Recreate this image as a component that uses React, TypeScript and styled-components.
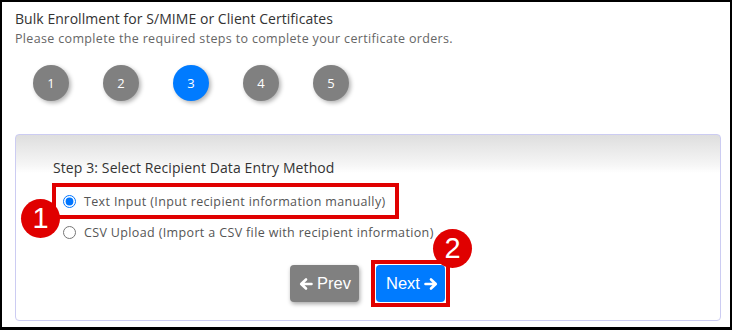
import React from "react";
import styled, { createGlobalStyle } from "styled-components";

const Global = createGlobalStyle`
  html, body { margin: 0; padding: 0; background: #000; }
  body { font-family: "Open Sans", "Noto Sans", sans-serif; }
  #root { padding: 2px 2px 3px 2px; }
`;

const Frame = styled.div`
  position: relative;
  box-sizing: border-box;
  width: 728px;
  height: 325px;
  background: #fff;
  padding: 7px 9px 0 13px;
  display: flex;
  flex-direction: column;
`;

const Title = styled.div`
  font-size: 14px;
  line-height: 20px;
  color: #333;
  font-weight: 500;
  letter-spacing: 0.05px;
`;

const Subtitle = styled.div`
  font-size: 12.5px;
  line-height: 20px;
  color: #666;
  letter-spacing: 0.34px;
`;

const Steps = styled.div`
  display: flex;
  gap: 34px;
  padding-left: 18px;
  margin-top: 16px;
`;

const StepDot = styled.div<{ $active?: boolean }>`
  width: 36px;
  height: 36px;
  border-radius: 50%;
  background: ${(p) => (p.$active ? "#007bff" : "#808080")};
  color: #fff;
  font-size: 13px;
  display: flex;
  align-items: center;
  justify-content: center;
  box-shadow: 2px 2px 4px rgba(0, 0, 0, 0.3);
`;

const Panel = styled.div`
  position: relative;
  margin-top: 33px;
  height: 187px;
  box-sizing: border-box;
  border: 1px solid #ccccf2;
  border-radius: 4px;
  background: linear-gradient(#dedede 0px, #f6f6f6 30px, #fff 38px, #fff 100%);
  padding-top: 24px;
  display: flex;
  flex-direction: column;
`;

const Body = styled.div`
  padding-left: 37px;
  display: flex;
  flex-direction: column;
`;

const StepLabel = styled.div`
  font-size: 14px;
  line-height: 18px;
  color: #333;
  font-weight: 500;
  letter-spacing: 0.1px;
`;

const Options = styled.div`
  display: flex;
  flex-direction: column;
  gap: 3px;
  margin-top: 10px;
`;

const OptionRow = styled.label<{ $highlight?: boolean }>`
  align-self: flex-start;
  display: inline-flex;
  align-items: center;
  gap: 8px;
  height: 28px;
  padding: 0 9px 0 7px;
  margin-left: 3px;
  font-size: 12.5px;
  color: #555;
  letter-spacing: 0.36px;
  outline: ${(p) => (p.$highlight ? "4px solid #e00000" : "none")};
`;

const Radio = styled.input`
  margin: 0;
  width: 13px;
  height: 13px;
  accent-color: #0075ff;
`;

const Buttons = styled.div`
  display: flex;
  justify-content: center;
  align-items: center;
  gap: 12px;
  margin-top: 14px;
  padding-left: 4px;
`;

const Highlight = styled.div`
  display: flex;
  padding: 1px;
  border: 4px solid #e00000;
`;

const Button = styled.button<{ $primary?: boolean }>`
  display: inline-flex;
  align-items: center;
  gap: 4px;
  height: 37px;
  width: 69px;
  padding: ${(p) => (p.$primary ? "0 0 0 10px" : "0 0 0 9px")};
  border: none;
  border-radius: 4px;
  font-family: "Liberation Sans", Arial, sans-serif;
  font-size: 16.5px;
  color: #fff;
  background: ${(p) => (p.$primary ? "#007bff" : "#808080")};
  box-shadow: ${(p) => (p.$primary ? "none" : "1px 2px 4px rgba(0,0,0,0.35)")};
`;

const Badge = styled.div<{ $x: number; $y: number }>`
  position: absolute;
  left: ${(p) => p.$x}px;
  top: ${(p) => p.$y}px;
  width: 39px;
  height: 39px;
  border-radius: 50%;
  background: #e00000;
  color: #fff;
  font-family: "Liberation Sans", Arial, sans-serif;
  font-size: 29px;
  display: flex;
  align-items: center;
  justify-content: center;
  z-index: 2;
`;

const Arrow = ({ dir }: { dir: "left" | "right" }) => (
  <svg width="14" height="14" viewBox="0 0 14 14" style={{ transform: dir === "left" ? "scaleX(-1)" : undefined }}>
    <path d="M1.5 7 H11.5 M7 2.5 L11.8 7 L7 11.5" stroke="#fff" strokeWidth="2.6" fill="none" strokeLinecap="round" strokeLinejoin="round" />
  </svg>
);

export default function App() {
  return (
    <>
      <Global />
      <Frame>
        <Title>Bulk Enrollment for S/MIME or Client Certificates</Title>
        <Subtitle>Please complete the required steps to complete your certificate orders.</Subtitle>
        <Steps>
          {[1, 2, 3, 4, 5].map((n) => (
            <StepDot key={n} $active={n === 3}>{n}</StepDot>
          ))}
        </Steps>
        <Panel>
          <Body>
            <StepLabel>Step 3: Select Recipient Data Entry Method</StepLabel>
            <Options>
              <OptionRow $highlight>
                <Radio type="radio" name="method" defaultChecked />
                Text Input (Input recipient information manually)
              </OptionRow>
              <OptionRow>
                <Radio type="radio" name="method" />
                CSV Upload (Import a CSV file with recipient information)
              </OptionRow>
            </Options>
          </Body>
          <Buttons>
            <Button>
              <Arrow dir="left" />
              Prev
            </Button>
            <Highlight>
              <Button $primary>
                Next
                <Arrow dir="right" />
              </Button>
            </Highlight>
          </Buttons>
        </Panel>
        <Badge $x={19} $y={197}>1</Badge>
        <Badge $x={431} $y={227}>2</Badge>
      </Frame>
    </>
  );
}
